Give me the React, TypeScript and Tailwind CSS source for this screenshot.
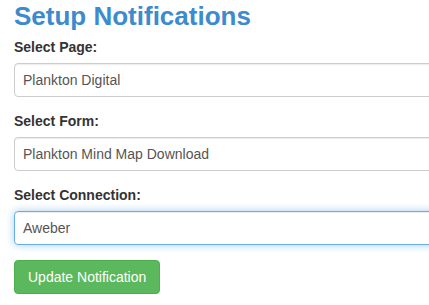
const fields = [
  { label: 'Select Page:', value: 'Plankton Digital', focus: false },
  { label: 'Select Form:', value: 'Plankton Mind Map Download', focus: false },
  { label: 'Select Connection:', value: 'Aweber', focus: true },
];

const App = () => {
  return (
    <div className="w-[429px] h-[305px] overflow-hidden bg-white font-['Liberation_Sans',Arial,sans-serif]">
      <div className="w-[470px] pl-[14px] pt-[1px]">
        <h2 className="text-[26px] leading-[30px] font-bold text-[#3d8bcd] mb-[6px]">Setup Notifications</h2>
        {fields.map((f) => (
          <div key={f.label} className="mb-[14px]">
            <label className="block text-[14px] leading-[20px] font-bold text-[#333] mb-[6px]">{f.label}</label>
            <div
              className={
                f.focus
                  ? 'h-[34px] flex items-center px-[8px] rounded-[4px] border border-[#66afe9] shadow-[inset_0_1px_1px_rgba(0,0,0,0.075),0_0_8px_rgba(102,175,233,0.6)] text-[14px] text-[#555]'
                  : 'h-[34px] flex items-center px-[8px] rounded-[4px] border border-[#ccc] shadow-[inset_0_1px_1px_rgba(0,0,0,0.075)] text-[14px] text-[#555]'
              }
            >
              {f.value}
            </div>
          </div>
        ))}
        <button className="h-[34px] px-[13px] rounded-[4px] bg-[#5cb85c] border border-[#4cae4c] text-white text-[14px] leading-[20px] mt-[1px]">
          Update Notification
        </button>
      </div>
    </div>
  );
};

export default App;
